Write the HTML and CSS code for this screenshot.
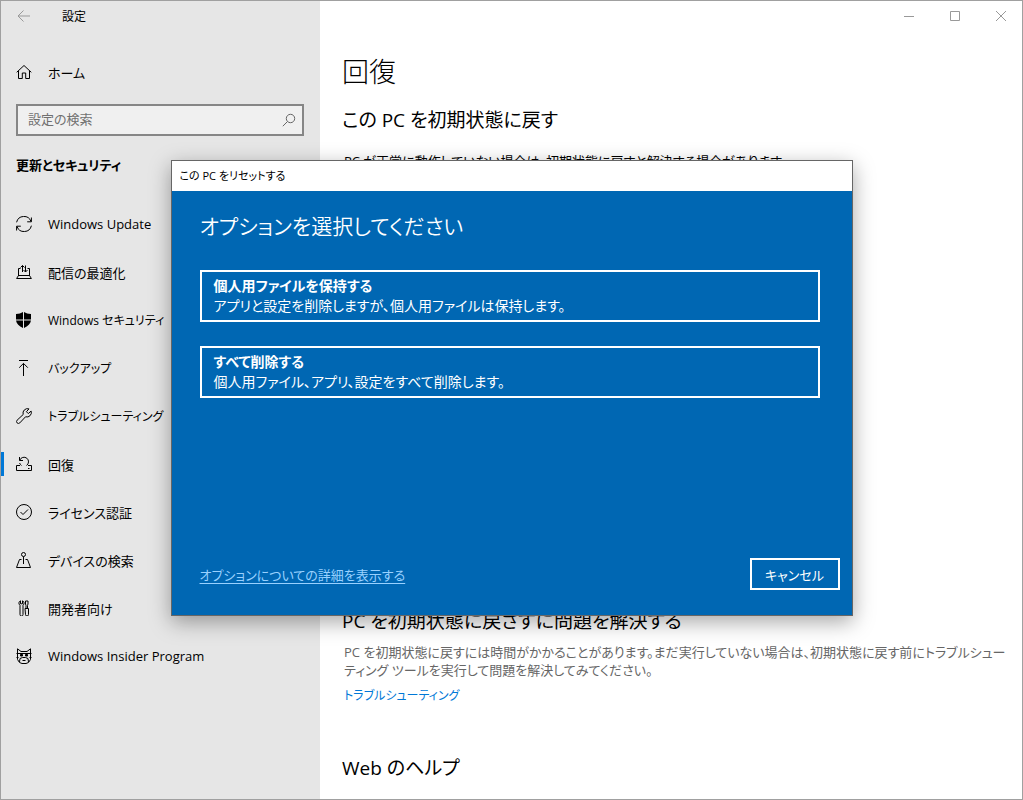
FILE: index.html
```html
<!DOCTYPE html>
<html lang="ja">
<head>
  <meta charset="UTF-8">
  <title>設定</title>
  <link rel="stylesheet" href="styles.css">
</head>
<body>
  <div class="window">
    <aside class="sidebar">
      <div class="titlebar">
        <button type="button" class="back-btn" aria-label="戻る">
          <svg width="14" height="14" viewBox="0 0 14 14"><path d="M13 7H1M6.500 1.500L1 7l5.500 5.500"/></svg>
        </button>
        <span class="app-name">設定</span>
      </div>

      <a href="#" class="nav-item home">
        <svg class="icon" viewBox="0 0 16 16"><path d="M.7 8.300L8 1.500l7.300 6.800M2.500 7v7.500h3.800V9h3.400v5.500h3.800V7"/></svg>
        ホーム
      </a>

      <div class="search-box">
        <input type="text" placeholder="設定の検索" aria-label="設定の検索">
        <svg width="14" height="14" viewBox="0 0 14 14"><circle cx="8.500" cy="5.500" r="4.200"/><path d="M5.500 8.500L.8 13.200"/></svg>
      </div>

      <h2 class="group-title">更新とセキュリティ</h2>

      <nav>
        <a href="#" class="nav-item">
          <svg class="icon" viewBox="0 0 16 16"><path d="M.6 6.300A7.500 7.500 0 0 1 15 5.500M15.400 9.700A7.500 7.500 0 0 1 1 10.500M15.400 1.500v4.300h-4.200M.6 14.500v-4.300h4.200"/></svg>
          Windows Update
        </a>
        <a href="#" class="nav-item">
          <svg class="icon" viewBox="0 0 16 16"><path d="M4.500 4.500h-2v7.500M11.500 4.500h2v7.500M2.500 11.500L.6 14.500h14.800l-1.900-3h-11M6.500 8V1.500M4.500 3.500l2-2 2 2M9.500 1.500V8M7.500 6l2 2 2-2"/></svg>
          配信の最適化
        </a>
        <a href="#" class="nav-item kana">
          <svg class="icon solid" viewBox="0 0 16 16"><path d="M7 0C5 1.300 3 2 0 2V7.500H7zM8 0c2 1.300 4 2 7 2v5.500H8zM0 8.500H7V16C3 14 .5 11.500 0 8.500zM15 8.500H8V16c4-2 6.500-4.500 7-7.500z"/></svg>
          Windows セキュリティ
        </a>
        <a href="#" class="nav-item kana">
          <svg class="icon" viewBox="0 0 16 16"><path d="M3 .5h9M7.500 16V3.500M3.200 7.700l4.300-4.300 4.300 4.300"/></svg>
          バックアップ
        </a>
        <a href="#" class="nav-item kana">
          <svg class="icon" viewBox="0 0 16 16"><path d="M13 .9A4.500 4.500 0 0 0 7.200 6.500L1.100 12.200a1.800 1.800 0 0 0 2.700 2.700L9.500 8.800A4.500 4.500 0 0 0 15.100 3L12.300 5.600 10.400 3.700z"/></svg>
          トラブルシューティング
        </a>
        <a href="#" class="nav-item active">
          <svg class="icon" viewBox="0 0 16 16"><path d="M4 9.500H.5v5h15v-5H12M12 12.500h1.500M3.500 1v3.500H7M3.800 4.200A4.500 4.500 0 1 1 10.500 9.500M5.500 9.500A4.500 4.500 0 0 1 3.600 7"/></svg>
          回復
        </a>
        <a href="#" class="nav-item">
          <svg class="icon" viewBox="0 0 16 16"><circle cx="8" cy="8" r="7.500"/><path d="M4.500 8l2.500 2.500L12 5.500"/></svg>
          ライセンス認証
        </a>
        <a href="#" class="nav-item">
          <svg class="icon" viewBox="0 0 16 16"><circle cx="7.500" cy="2.500" r="2"/><path d="M7.500 4.500V12M5.500 7.500h-2l-3 8h14l-3-8h-2"/></svg>
          デバイスの検索
        </a>
        <a href="#" class="nav-item">
          <svg class="icon" viewBox="0 0 16 16"><path d="M4.500.8v3h2v-3a2.500 2.500 0 0 1 .5 4.400v9.300a1 1 0 0 1-3 0V5.200A2.500 2.500 0 0 1 4.500.8M9.500 1h2.500v3l-.5 1.500v3M9.500 1v3l.5 1.500v3M9 8.500h3.500v6a1 1 0 0 1-3 0z"/></svg>
          開発者向け
        </a>
        <a href="#" class="nav-item">
          <svg class="icon" viewBox="0 0 16 16"><path d="M1.500 5V.8L5 3.500h6L14.500.8V5M.5 5.500h15M1.500 5.500v6l2 3 2.500 1h4l2.500-1 2-3v-6M.5 9.500h2M13.500 9.500h2M3.500 14l.5-3.500 2.500-1h3l2.500 1 .5 3.500M6.500 12.500h3"/><path d="M4.500 6.500h2v1.500h-2zM9.500 6.500h2v1.500h-2z" fill="#000"/></svg>
          Windows Insider Program
        </a>
      </nav>
    </aside>

    <main class="content">
      <div class="window-buttons">
        <button type="button" aria-label="最小化"><svg width="12" height="12" viewBox="0 0 12 12"><path d="M1 6.500h10"/></svg></button>
        <button type="button" aria-label="最大化"><svg width="12" height="12" viewBox="0 0 12 12"><path d="M1.500 1.500h9v9h-9z"/></svg></button>
        <button type="button" aria-label="閉じる"><svg width="12" height="12" viewBox="0 0 12 12"><path d="M1 1l10 10M11 1L1 11"/></svg></button>
      </div>

      <h1>回復</h1>

      <section class="reset-section">
        <h2>この PC を初期状態に戻す</h2>
        <p>PC が正常に動作していない場合は、初期状態に戻すと解決する場合があります</p>
      </section>

      <section class="fix-section">
        <h2>PC を初期状態に戻さずに問題を解決する</h2>
        <p>PC を初期状態に戻すには時間がかかることがあります。まだ実行していない場合は、初期状態に戻す前にトラブルシューティング ツールを実行して問題を解決してみてください。</p>
        <a href="#">トラブルシューティング</a>
      </section>

      <section>
        <h2>Web のヘルプ</h2>
      </section>
    </main>

    <div class="overlay">
      <div class="dialog" role="dialog" aria-labelledby="dialog-title">
        <div class="dialog-bar" id="dialog-title">この PC をリセットする</div>
        <div class="dialog-body">
          <h2>オプションを選択してください</h2>
          <button type="button" class="option">
            <strong>個人用ファイルを保持する</strong>
            <span>アプリと設定を削除しますが、個人用ファイルは保持します。</span>
          </button>
          <button type="button" class="option">
            <strong>すべて削除する</strong>
            <span>個人用ファイル、アプリ、設定をすべて削除します。</span>
          </button>
          <div class="dialog-footer">
            <a href="#">オプションについての詳細を表示する</a>
            <button type="button" class="cancel-btn">キャンセル</button>
          </div>
        </div>
      </div>
    </div>
  </div>
</body>
</html>
```
FILE: styles.css
```css
* {
  box-sizing: border-box;
}

body {
  margin: 0;
  font-family: "Open Sans", "Noto Sans CJK JP", sans-serif;
  font-size: 13px;
  font-feature-settings: "palt";
  color: #000;
}

button,
input {
  font: inherit;
  font-feature-settings: inherit;
  color: inherit;
}

button {
  padding: 0;
  border: none;
  background: none;
}

h1,
h2,
p {
  margin: 0;
  font-weight: 400;
}

svg {
  flex: none;
  fill: none;
  stroke: currentColor;
}

.window {
  position: relative;
  display: flex;
  min-height: 100vh;
  border: 1px solid #a0a0a0;
  background: #fff;
}

/* sidebar */
.sidebar {
  flex: none;
  width: 319px;
  background: #e6e6e6;
}

.titlebar {
  display: flex;
  align-items: center;
  gap: 31px;
  height: 30px;
  padding-left: 16px;
  font-size: 12px;
}

.back-btn {
  display: flex;
  color: #999;
}

.nav-item {
  display: flex;
  align-items: center;
  gap: 16px;
  height: 48px;
  padding-left: 15px;
  color: #000;
  text-decoration: none;
  white-space: nowrap;
}

.nav-item.home {
  margin-top: 17px;
}

/* long katakana labels */
.nav-item.kana {
  font-size: 12px;
}

.nav-item.active {
  background: linear-gradient(#0078d7, #0078d7) left center / 3px 24px no-repeat;
}

.icon {
  width: 16px;
  height: 16px;
}

.icon.solid {
  fill: #000;
  stroke: none;
}

.search-box {
  display: flex;
  align-items: center;
  height: 32px;
  margin: 8px 16px 0 15px;
  padding: 0 6px 0 10px;
  border: 2px solid #868686;
  background: #f0f0f0;
  color: #666;
}

.search-box input {
  flex: 1;
  min-width: 0;
  padding: 0 0 3px;
  border: none;
  outline: none;
  background: none;
}

.search-box input::placeholder {
  color: #707070;
}

.group-title {
  margin: 17px 0 23px 15px;
  font-size: 13px;
  font-weight: 600;
  line-height: 24px;
}

/* content */
.content {
  flex: 1;
  min-width: 0;
  padding-left: 22px;
}

.window-buttons {
  display: flex;
  justify-content: flex-end;
  height: 30px;
  margin-right: -2px;
  color: #999;
}

.window-buttons button {
  display: flex;
  align-items: center;
  justify-content: center;
  width: 46px;
}

.content h1 {
  margin-top: 21px;
  font-size: 27px;
  font-weight: 300;
  line-height: 40px;
}

.content h2 {
  font-size: 19px;
  line-height: 28px;
}

.content p {
  font-size: 13px;
  line-height: 18px;
}

.content a {
  margin-left: 2px;
  color: #0078d7;
  font-size: 12px;
  text-decoration: none;
}

.reset-section {
  height: 515px;
  padding-top: 14px;
}

.reset-section p {
  margin: 18px 0 0 2px;
}

.fix-section {
  margin-bottom: 50px;
}

.fix-section p {
  margin: 8px 14px 7px 2px;
  color: #666;
}

/* dialog */
.overlay {
  position: absolute;
  inset: 0;
  display: flex;
  align-items: center;
  justify-content: center;
  padding-bottom: 24px;
}

.dialog {
  display: flex;
  flex-direction: column;
  width: 682px;
  min-height: 456px;
  border: 1px solid #666;
  background: #0067b3;
  color: #fff;
  box-shadow: 0 6px 20px rgba(0, 0, 0, 0.35);
}

.dialog-bar {
  padding-left: 8px;
  background: #fff;
  color: #000;
  font-size: 11px;
  line-height: 30px;
}

.dialog-body {
  display: flex;
  flex: 1;
  flex-direction: column;
  padding: 17px 12px 25px 28px;
}

.dialog-body h2 {
  margin-bottom: 26px;
  font-size: 21px;
  font-weight: 350;
  line-height: 36px;
}

.option {
  display: flex;
  flex-direction: column;
  margin: 0 20px 24px 0;
  padding: 4px 12px;
  border: 2px solid #fff;
  font-size: 14px;
  line-height: 20px;
  text-align: left;
}

.dialog-footer {
  display: flex;
  align-items: center;
  justify-content: space-between;
  margin-top: auto;
}

.dialog-footer a {
  color: #99d1ff;
  text-underline-offset: 3px;
}

.cancel-btn {
  width: 90px;
  height: 32px;
  border: 2px solid #fff;
}
```
